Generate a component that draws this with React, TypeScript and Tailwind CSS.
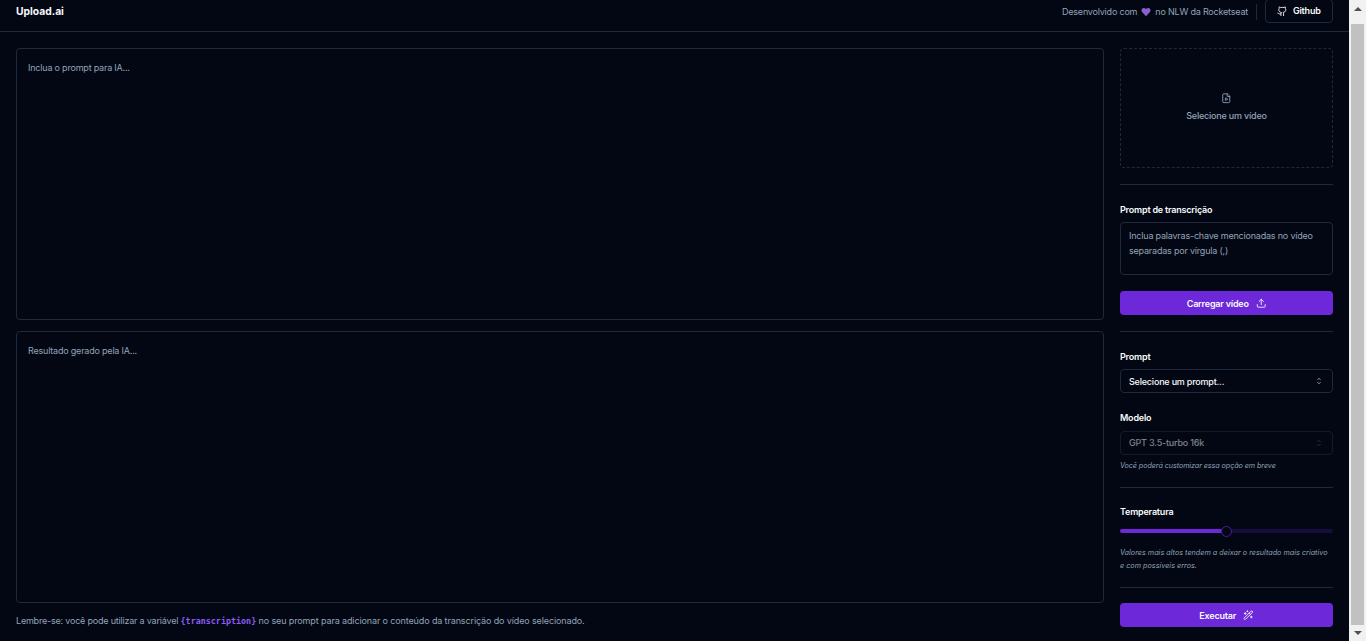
import { Github, FilePlay, Upload, WandSparkles } from "lucide-react";
import { RxCaretSort } from "react-icons/rx";

const font = { fontFamily: "Inter, 'Liberation Sans', sans-serif" };

function Sep() {
  return <div className="h-px w-full shrink-0 bg-[#1e293b]" />;
}

function Label({ children }: { children: React.ReactNode }) {
  return <label className="block text-[9px] font-semibold leading-[9.33px] tracking-[-0.2px] text-[#f8fafc]">{children}</label>;
}

function Select({ text, disabled }: { text: string; disabled?: boolean }) {
  return (
    <div
      className={
        "flex h-6 w-full items-center justify-between rounded-[4px] border px-2 text-[9px] font-medium " +
        (disabled ? "border-[#1e293b]/60 text-[#f8fafc]/50" : "border-[#1e293b] text-[#f8fafc]")
      }
    >
      <span>{text}</span>
      <RxCaretSort className={"h-[10px] w-[10px] " + (disabled ? "opacity-30" : "opacity-60")} />
    </div>
  );
}

function PrimaryButton({ children }: { children: React.ReactNode }) {
  return (
    <button className="flex h-6 w-full items-center justify-center gap-[5px] rounded-[4px] bg-[#6d28d9] pt-px text-[9px] font-semibold text-[#f8fafc]">
      {children}
    </button>
  );
}

export default function App() {
  return (
    <div className="flex h-[641px] w-full overflow-hidden bg-[#020713] tracking-[-0.2px]" style={font}>
      <div className="flex min-w-0 flex-1 flex-col">
        <header className="flex h-[32px] shrink-0 items-start justify-between border-b border-[#1e293b] pl-4 pr-4">
          <h1 className="mt-[4px] text-[10.3px] font-bold leading-[15px] tracking-normal text-[#f8fafc]">Upload.ai</h1>
          <div className="flex items-center gap-2">
            <span className="flex items-center gap-[3px] text-[9px] text-[#94a3b8]">
              Desenvolvido com
              <svg viewBox="0 0 24 24" className="mx-px h-[10px] w-[10px]" fill="#8b5fd0">
                <path d="M12 22 2.6 12.200C-.6 8.400 1.600 2.600 6.800 2.600c2.300 0 4 1.100 5.200 3 1.200-1.900 2.900-3 5.200-3 5.200 0 7.400 5.800 4.200 9.600L12 22z" />
              </svg>
              no NLW da Rocketseat
            </span>
            <div className="h-4 w-px bg-[#1e293b]" />
            <button className="-mt-[1px] flex h-6 w-[68px] items-center justify-center gap-[5px] rounded-[4px] border border-[#1e293b] text-[9px] font-semibold text-[#f8fafc]">
              <Github className="h-[10.500px] w-[10.500px]" strokeWidth={2} />
              Github
            </button>
          </div>
        </header>

        <main className="flex min-h-0 flex-1 gap-4 pb-[14px] pl-4 pr-4 pt-4">
          <div className="flex min-w-0 flex-1 flex-col gap-[11px]">
            <textarea
              className="min-h-0 flex-1 resize-none rounded-[4px] border border-[#1e293b] bg-transparent p-[11px] text-[9px] leading-[15px] text-[#f8fafc] outline-none placeholder:text-[#94a3b8]"
              placeholder="Inclua o prompt para IA..."
            />
            <textarea
              readOnly
              className="min-h-0 flex-1 resize-none rounded-[4px] border border-[#1e293b] bg-transparent p-[11px] text-[9px] leading-[15px] text-[#f8fafc] outline-none placeholder:text-[#94a3b8]"
              placeholder="Resultado gerado pela IA..."
            />
            <p className="h-[13px] text-[9px] leading-[13px] text-[#94a3b8]">
              Lembre-se: você pode utilizar a variável{" "}
              <code className="text-[8.4px] font-bold tracking-normal text-[#8b5cf6]" style={{ fontFamily: "'DejaVu Sans Mono', 'Liberation Mono', monospace" }}>
                {"{transcription}"}
              </code>{" "}
              <span className="tracking-[-0.12px]">no seu prompt para adicionar o conteúdo da transcrição do vídeo selecionado.</span>
            </p>
          </div>

          <aside className="flex w-[213px] shrink-0 flex-col">
            <div className="flex h-[120px] w-full flex-col items-center justify-center gap-[5px] rounded-[4px] border border-dashed border-[#1e293b] text-[9px] font-medium text-[#94a3b8]">
              <FilePlay className="h-[10.500px] w-[10.500px]" />
              Selecione um vídeo
            </div>
            <div className="my-4"><Sep /></div>

            <div className="mt-[4px]"><Label>Prompt de transcrição</Label></div>
            <textarea
              className="mt-2 h-[53px] w-full shrink-0 resize-none rounded-[4px] border border-[#1e293b] bg-transparent px-2 py-[5px] text-[9px] leading-[15px] text-[#f8fafc] outline-none placeholder:text-[#94a3b8]"
              placeholder="Inclua palavras-chave mencionadas no vídeo separadas por vírgula (,)"
            />
            <div className="mt-4">
              <PrimaryButton>
                Carregar vídeo
                <Upload className="ml-[2px] h-[10.500px] w-[10.500px]" />
              </PrimaryButton>
            </div>
            <div className="my-4"><Sep /></div>

            <div className="mt-[4px]"><Label>Prompt</Label></div>
            <div className="mt-2"><Select text="Selecione um prompt..." /></div>
            <div className="mt-[20px]"><Label>Modelo</Label></div>
            <div className="mt-[8px]"><Select text="GPT 3.5-turbo 16k" disabled /></div>
            <span className="mt-[6px] text-[7.2px] italic leading-[10px] tracking-[-0.07px] text-[#94a3b8]">Você poderá customizar essa opção em breve</span>
            <div className="mb-4 mt-[16px]"><Sep /></div>

            <div className="mt-[3px]"><Label>Temperatura</Label></div>
            <div className="relative mt-[13px] h-1 w-full rounded-full bg-[#6d28d9]/20">
              <div className="h-full w-1/2 rounded-full bg-[#6d28d9]" />
              <div className="absolute left-[101px] top-[-3.5px] h-[11px] w-[11px] rounded-full border border-[#4c1d95] bg-[#020713]" />
            </div>
            <p className="mt-[13px] text-[7.2px] italic leading-[13px] tracking-[0.03px] text-[#94a3b8]">
              Valores mais altos tendem a deixar o resultado mais criativo
              <br />
              e com possíveis erros.
            </p>
            <div className="mb-[15px] mt-[15px]"><Sep /></div>

            <PrimaryButton>
              Executar
              <WandSparkles className="ml-[2px] h-[10.500px] w-[10.500px]" />
            </PrimaryButton>
          </aside>
        </main>
      </div>

      <div className="flex w-[17px] shrink-0 flex-col bg-[#f1f1f1]">
        <div className="flex h-[17px] items-center justify-center">
          <svg viewBox="0 0 8 4" className="h-1 w-2" fill="#505050"><path d="M4 0 8 4H0z" /></svg>
        </div>
        <div className="mx-[2px] mt-[7px] h-[601px] bg-[#c1c1c1]" />
        <div className="flex flex-1 items-center justify-center">
          <svg viewBox="0 0 8 4" className="h-1 w-2" fill="#505050"><path d="M0 0H8L4 4z" /></svg>
        </div>
      </div>
    </div>
  );
}
